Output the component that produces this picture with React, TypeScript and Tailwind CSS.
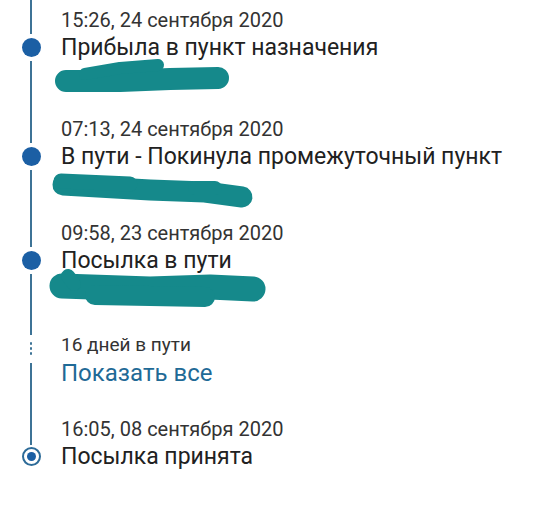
import React from "react";

const LINE = "bg-[#3d7396]";

function Scribble({ view, w, h, className, children }: { view: string; w: number; h: number; className: string; children: React.ReactNode }) {
  return (
    <svg width={w} height={h} viewBox={view} className={`block overflow-visible ${className}`}>
      <g stroke="#15898b" fill="none" strokeLinecap="round" strokeLinejoin="round">
        {children}
      </g>
    </svg>
  );
}

function Entry({ date, title, bottom, children }: { date: string; title: string; bottom: string; children?: React.ReactNode }) {
  return (
    <div className="flex">
      <div className="flex w-[61px] shrink-0 flex-col items-center pl-[1px]">
        <div className={`h-[34px] w-[2px] ${LINE}`} />
        <div className="mt-[4px] h-[19px] w-[19px] rounded-full bg-[#1b5fa4]" />
        <div className={`mt-[4px] w-[2px] flex-1 ${LINE}`} />
      </div>
      <div className={`flex-1 pt-[7px] ${bottom}`}>
        <div className="text-[20px] leading-[26px] text-[#333]">{date}</div>
        <div className="text-[23px] leading-[30px] text-[#212121]">{title}</div>
        {children}
      </div>
    </div>
  );
}

export default function App() {
  return (
    <div className="h-[506px] w-[540px] overflow-hidden bg-white font-['Roboto',sans-serif]">
      <Entry date="15:26, 24 сентября 2020" title="Прибыла в пункт назначения" bottom="h-[109px]">
        <Scribble view="50 60 185 35" w={185} h={35} className="-ml-[11px] -mt-[3px]">
          <path d="M66 81 L120 81 L170 79 L218 78" strokeWidth={22} />
          <path d="M85 74 L120 68 L158 65" strokeWidth={12} />
        </Scribble>
      </Entry>
      <Entry date="07:13, 24 сентября 2020" title="В пути - Покинула промежуточный пункт" bottom="h-[104px]">
        <Scribble view="48 170 210 40" w={210} h={40} className="-ml-[13px] -mt-[2px]">
          <path d="M63 185 L150 190 L205 192 L242 197" strokeWidth={21} />
          <path d="M61 181 L130 184" strokeWidth={15} />
          <path d="M195 188 L215 188" strokeWidth={14} />
        </Scribble>
      </Entry>
      <Entry date="09:58, 23 сентября 2020" title="Посылка в пути" bottom="h-[114px]">
        <Scribble view="46 265 225 45" w={225} h={45} className="-ml-[15px] -mt-[11px]">
          <path d="M62 286 L150 289 L210 287 L253 289" strokeWidth={25} />
          <path d="M68 276 L74 284" strokeWidth={14} />
          <path d="M95 295 L205 297" strokeWidth={20} />
        </Scribble>
      </Entry>
      <div className="flex h-[82px]">
        <div className="flex w-[61px] shrink-0 flex-col items-center pl-[1px]">
          <div className={`h-[8px] w-[2px] ${LINE}`} />
          <div className="mt-[7px] flex flex-col gap-[2.5px]">
            <div className="h-[2.5px] w-[2.5px] rounded-full bg-[#3d7396]" />
            <div className="h-[2.5px] w-[2.5px] rounded-full bg-[#3d7396]" />
            <div className="h-[2.5px] w-[2.5px] rounded-full bg-[#3d7396]" />
          </div>
          <div className={`mt-[8px] w-[2px] flex-1 ${LINE}`} />
        </div>
        <div className="flex-1 pt-[5px]">
          <div className="text-[19px] leading-[26px] text-[#333]">16 дней в пути</div>
          <div className="text-[24px] leading-[30px] text-[#1f6a96]">Показать все</div>
        </div>
      </div>
      <div className="flex">
        <div className="flex w-[61px] shrink-0 flex-col items-center pl-[1px]">
          <div className={`h-[36px] w-[2px] ${LINE}`} />
          <div className="mt-[2px] flex h-[19px] w-[19px] items-center justify-center rounded-full border-2 border-[#2d6b98]">
            <div className="h-[9px] w-[9px] rounded-full bg-[#1b5fa4]" />
          </div>
        </div>
        <div className="flex-1 pt-[7px]">
          <div className="text-[20px] leading-[26px] text-[#333]">16:05, 08 сентября 2020</div>
          <div className="text-[23px] leading-[30px] text-[#212121]">Посылка принята</div>
        </div>
      </div>
    </div>
  );
}
